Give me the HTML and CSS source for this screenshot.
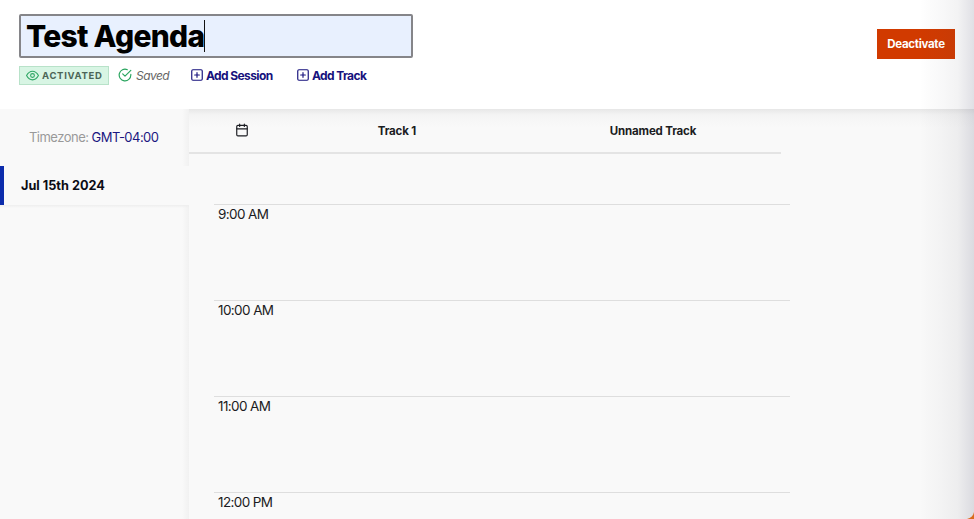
FILE: index.html
```html
<!DOCTYPE html>
<html lang="en">
<head>
<meta charset="utf-8">
<title>Test Agenda</title>
<link rel="stylesheet" href="styles.css">
</head>
<body>
<div class="app">
  <header class="header">
    <div class="heading">
      <div class="title-field"><span class="title">Test Agenda</span><span class="caret"></span></div>
      <div class="toolbar">
        <span class="badge"><svg class="eye" viewBox="0 0 24 24"><path d="M1 12C4 6.500 7.800 4 12 4s8 2.500 11 8c-3 5.500-6.800 8-11 8S4 17.500 1 12Z"/><circle cx="12" cy="12" r="3.500"/></svg><span class="badge-text">ACTIVATED</span></span>
        <span class="saved"><svg class="check" viewBox="0 0 24 24"><path d="M22 11v1a10 10 0 1 1-6-9.100"/><path d="M22 4 12 14l-4-4"/></svg><span>Saved</span></span>
        <a class="action session"><svg class="plus" viewBox="0 0 24 24"><rect x="3" y="3" width="18" height="18" rx="2"/><path d="M12 8v8M8 12h8"/></svg><span>Add Session</span></a>
        <a class="action"><svg class="plus" viewBox="0 0 24 24"><rect x="3" y="3" width="18" height="18" rx="2"/><path d="M12 8v8M8 12h8"/></svg><span>Add Track</span></a>
      </div>
    </div>
    <button class="deactivate">Deactivate</button>
  </header>
  <div class="body">
    <aside class="sidebar">
      <div class="timezone">Timezone: <a>GMT-04:00</a></div>
      <div class="day"><span>Jul 15th 2024</span></div>
      <div class="side-rest"></div>
    </aside>
    <main class="schedule">
      <div class="columns">
        <div class="date-cell"><svg class="calendar" viewBox="0 0 24 24"><rect x="3" y="4" width="18" height="18" rx="2"/><path d="M16 2v4M8 2v4M3 10h18"/></svg></div>
        <div class="column"><span>Track 1</span></div>
        <div class="column"><span>Unnamed Track</span></div>
      </div>
      <div class="hours">
        <div class="hour">9:00 AM</div>
        <div class="hour">10:00 AM</div>
        <div class="hour">11:00 AM</div>
        <div class="hour">12:00 PM</div>
      </div>
    </main>
  </div>
  <div class="edge"></div>
  <svg class="corner" viewBox="0 0 8 8"><path d="M8 1C7.500 4.500 5 7 1 8h7Z"/></svg>
</div>
</body>
</html>
```
FILE: styles.css
```css
* { box-sizing: border-box; }
body { margin: 0; font-family: Inter, "Liberation Sans", sans-serif; color: #1b1c22; overflow: hidden; }
svg { fill: none; stroke: currentColor; stroke-width: 2; stroke-linecap: round; stroke-linejoin: round; flex: none; }
.app { position: relative; width: 974px; height: 519px; overflow: hidden; background: #f9f9f9; display: flex; flex-direction: column; }
.header { height: 109px; flex: none; background: #fff; display: flex; justify-content: space-between; padding: 14px 19px 0 19px; }
.title-field { width: 394px; height: 44px; border: 2px solid #858589; border-radius: 2px; background: #e8f0fe; display: flex; align-items: center; padding-left: 5px; }
.title { color: #000; font-weight: 800; font-size: 30px; letter-spacing: -0.720px; line-height: 40px; white-space: nowrap; }
.caret { width: 1px; height: 32px; background: #111; }
.toolbar { display: flex; align-items: center; height: 20px; margin-top: 7px; font-size: 12px; }
.badge { width: 90px; height: 19px; background: #d8f5e4; border: 1px solid #b8e2c9; display: flex; align-items: center; padding-left: 6px; gap: 3px; color: #4c6557; font-size: 9.500px; font-weight: 700; letter-spacing: .7px; }
.eye { width: 13px; height: 13px; color: #2fa765; }
.saved { width: 72px; margin-left: 9px; display: flex; align-items: center; gap: 4px; font-style: italic; font-size: 12px; letter-spacing: -.5px; color: #666; }
.check { width: 14px; height: 14px; color: #28a45e; }
.action { display: flex; align-items: center; gap: 2px; color: #17127d; font-weight: 700; font-size: 12px; letter-spacing: -.6px; white-space: nowrap; }
.session { width: 106px; }
.plus { width: 14px; height: 14px; }
.deactivate { width: 78px; height: 30px; margin-top: 15px; padding: 0; border: 0; background: #d13a00; color: #fff; font: 700 11.500px Inter, sans-serif; letter-spacing: -.3px; }
.body { flex: 1; display: flex; min-height: 0; }
.sidebar { width: 189px; flex: none; display: flex; flex-direction: column; }
.timezone { height: 57px; padding: 18px 0 0 29px; font-size: 13px; line-height: 20px; letter-spacing: -.52px; color: #999; white-space: nowrap; background: linear-gradient(to left, #f1f1f1, #f9f9f9 7px); }
.timezone a { color: #1b1781; }
.day { height: 39px; border-left: 4px solid #0c2cac; padding-left: 17px; display: flex; align-items: center; font-size: 12.700px; font-weight: 700; color: #0c0c14; }
.side-rest { flex: 1; background: linear-gradient(#eeeeee, transparent 3px), linear-gradient(to left, #f1f1f1, #f9f9f9 7px); }
.schedule { flex: 1; background: linear-gradient(#e7e7e7, #f4f4f4 6px, #f9f9f9 18px); }
.columns { width: 592px; height: 45px; border-bottom: 2px solid #e4e4e4; display: grid; grid-template-columns: 80px 256px 256px; align-items: center; font-size: 11.500px; font-weight: 700; letter-spacing: -.15px; }
.date-cell { padding: 0 0 2px 46px; display: flex; }
.calendar { width: 14px; height: 14px; }
.column { text-align: center; }
.hours { width: 576px; margin: 50px 0 0 25px; font-size: 13.500px; line-height: 19px; letter-spacing: -.6px; }
.hour { height: 96px; border-top: 1px solid #dedede; padding: 0 4px; }
.edge { position: absolute; right: 0; top: 0; width: 54px; height: 519px; background: linear-gradient(to right, rgba(70,70,85,0), rgba(70,70,85,.015) 15%, rgba(70,70,85,.035) 40%, rgba(70,70,85,.065) 70%, rgba(70,70,100,.14) 92%, rgba(70,70,100,.17)); pointer-events: none; }
.corner { position: absolute; right: 0; bottom: 0; width: 8px; height: 8px; fill: #d96b1c; stroke: none; }
```
